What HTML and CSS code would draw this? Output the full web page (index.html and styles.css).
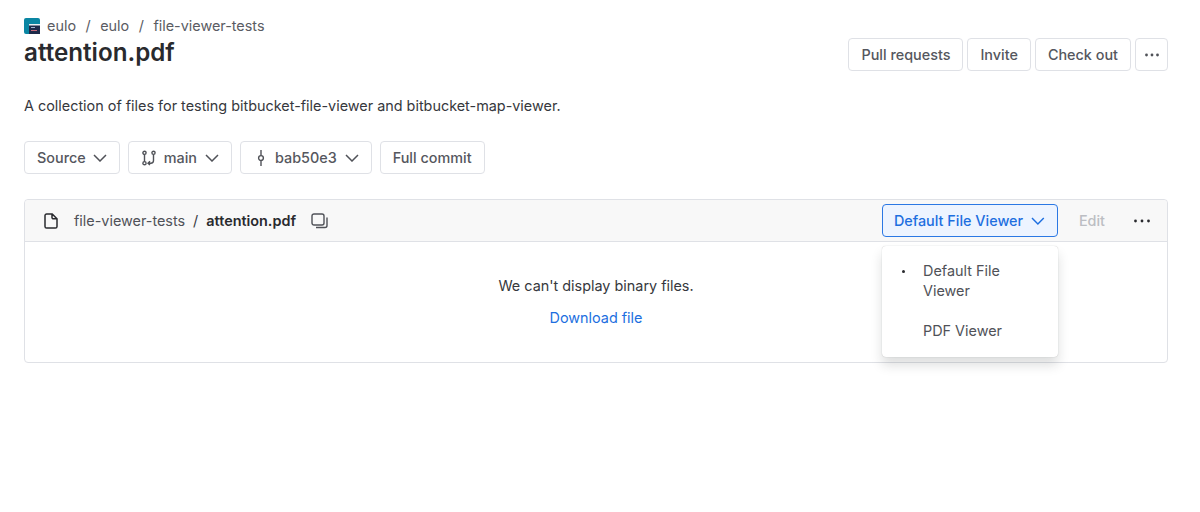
FILE: index.html
```html
<!DOCTYPE html>
<html lang="en">
<head>
<meta charset="utf-8">
<title>attention.pdf</title>
<link rel="stylesheet" href="styles.css">
</head>
<body>
<main class="page">
  <nav class="crumbs">
    <svg class="logo" width="16" height="16" viewBox="0 0 16 16"><rect width="16" height="16" rx="2" fill="#0a86a3"/><rect x="5" y="6" width="11" height="10" fill="#1d2a4a"/><rect x="5" y="6" width="11" height="1.5" fill="#e8eef2"/><rect x="7" y="9" width="4" height="1" fill="#9fb4d0"/><rect x="7" y="12" width="6" height="1" fill="#c56a7a"/></svg>
    <a class="crumb">eulo</a><span class="sep">/</span><a class="crumb">eulo</a><span class="sep">/</span><a class="crumb">file-viewer-tests</a>
  </nav>
  <header class="head">
    <h1 class="title">attention.pdf</h1>
    <div class="actions">
      <button class="btn">Pull requests</button>
      <button class="btn">Invite</button>
      <button class="btn">Check out</button>
      <button class="btn btn-more"><svg width="16" height="4" viewBox="0 0 16 4"><circle cx="2.5" cy="2" r="1.4"/><circle cx="8" cy="2" r="1.4"/><circle cx="13.5" cy="2" r="1.4"/></svg></button>
    </div>
  </header>
  <p class="desc">A collection of files for testing bitbucket-file-viewer and bitbucket-map-viewer.</p>
  <div class="refs">
    <button class="btn ref ref-source">Source<svg class="chev" width="14" height="8" viewBox="0 0 14 8"><path d="M1 1l6 6 6-6"/></svg></button>
    <button class="btn ref"><svg class="ico" width="14" height="16" viewBox="0 0 14 16"><circle cx="2.5" cy="2.8" r="1.6"/><circle cx="2.5" cy="13.2" r="1.6"/><circle cx="11.5" cy="2.8" r="1.6"/><path d="M2.5 4.4v7.2M11.5 4.4v6.100a2.700 2.700 0 0 1-2.700 2.700H6.500M8 11.300l-2 1.900 2 1.900"/></svg>main<svg class="chev" width="14" height="8" viewBox="0 0 14 8"><path d="M1 1l6 6 6-6"/></svg></button>
    <button class="btn ref"><svg class="ico commit" width="8" height="16" viewBox="0 0 8 16"><circle cx="4" cy="8" r="2.4"/><path d="M4 0v5.600M4 10.400V16"/></svg>bab50e3<svg class="chev" width="14" height="8" viewBox="0 0 14 8"><path d="M1 1l6 6 6-6"/></svg></button>
    <button class="btn ref">Full commit</button>
  </div>
  <section class="card">
    <div class="card-head">
      <svg class="ico file" width="14" height="16" viewBox="0 0 14 16"><path d="M2.6 1h5.6L13 5.8v7.6a1.6 1.6 0 0 1-1.6 1.6H2.6A1.6 1.6 0 0 1 1 13.400V2.600A1.600 1.600 0 0 1 2.600 1zM8 1v3.400A1.400 1.400 0 0 0 9.400 5.800H13"/></svg>
      <span class="path">file-viewer-tests</span><span class="path-sep">/</span><strong class="path-file">attention.pdf</strong>
      <svg class="ico copy" width="18" height="16" viewBox="0 0 18 16"><rect x="1" y="1" width="12" height="11" rx="2"/><path d="M16 4.500v8a2 2 0 0 1-2 2H5"/></svg>
      <div class="card-actions">
        <button class="viewer">Default File Viewer<svg class="chev" width="14" height="8" viewBox="0 0 14 8"><path d="M1 1l6 6 6-6"/></svg></button>
        <span class="edit">Edit</span>
        <svg class="dots" width="18" height="4" viewBox="0 0 18 4"><circle cx="2.500" cy="2" r="1.400"/><circle cx="9" cy="2" r="1.400"/><circle cx="15.500" cy="2" r="1.400"/></svg>
      </div>
      <ul class="menu">
        <li class="menu-item current">Default File Viewer</li>
        <li class="menu-item">PDF Viewer</li>
      </ul>
    </div>
    <div class="card-body">
      <p class="msg">We can't display binary files.</p>
      <a class="download">Download file</a>
    </div>
  </section>
</main>
</body>
</html>
```
FILE: styles.css
```css
* { box-sizing: border-box; }
html, body { margin: 0; background: #fff; }
body { font-family: Inter, "Liberation Sans", sans-serif; font-size: 14.4px; color: #36383d; height: 512px; overflow: hidden; }
.page { padding: 16px 32px 0 24px; }
.crumbs { display: flex; align-items: center; height: 20px; color: #5a5c63; line-height: 20px; }
.logo { margin-right: 7px; }
.sep { margin: 0 9.500px; }
.head { display: flex; justify-content: space-between; align-items: flex-start; height: 36px; }
.title { margin: 0; font-size: 24.200px; font-weight: 600; line-height: 34px; color: #292a2e; }
.actions { display: flex; gap: 4px; margin-top: 2px; }
.btn { height: 33px; padding: 0 12px; background: #fff; border: 1px solid #dfe1e6; border-radius: 4px; font: 500 14.4px Inter, "Liberation Sans", sans-serif; color: #55575e; display: inline-flex; align-items: center; }
.btn-more { width: 33px; padding: 0; justify-content: center; }
.btn-more svg { fill: #505258; }
.desc { margin: 24px 0 0; line-height: 20px; height: 20px; }
.refs { display: flex; gap: 8px; margin-top: 25px; }
.chev { fill: none; stroke: #505258; stroke-width: 1.500; margin-left: 8px; }
.ref-source .chev { margin-left: 7px; }
.ico { fill: none; stroke: #505258; stroke-width: 1.400; }
.ref .ico { margin: 0 8px 0 1px; }
.ref .commit { margin: 0 10px 0 4px; }
.card { position: relative; margin-top: 25px; height: 164px; border: 1px solid #dfe1e6; border-radius: 4px; }
.card-head { position: relative; display: flex; align-items: center; height: 42px; padding: 0 16px 0 19px; background: #f8f8f8; border-bottom: 1px solid #dfe1e6; border-radius: 4px 4px 0 0; }
.file { stroke: #292a2e; stroke-width: 1.500; margin-right: 16px; }
.path { color: #505258; }
.path-sep { margin: 0 8px; }
.path-file { font-weight: 600; color: #292a2e; }
.copy { margin-left: 15px; }
.card-actions { margin-left: auto; display: flex; align-items: center; }
.viewer { height: 33px; width: 176px; padding: 0 12px 0 11px; display: inline-flex; align-items: center; background: #edf4ff; border: 1px solid #2b78e4; border-radius: 4px; font: 500 14.4px Inter, "Liberation Sans", sans-serif; color: #1d6fe0; white-space: nowrap; }
.viewer .chev { stroke: #1d6fe0; }
.edit { margin-left: 21px; font-weight: 500; color: #bcbec3; }
.dots { margin-left: 28px; fill: #292a2e; }
.menu { position: absolute; z-index: 2; top: 46px; left: 857px; width: 176px; height: 111px; margin: 0; padding: 14.500px 0 0 41px; list-style: none; background: #fff; border-radius: 4px; box-shadow: 0 8px 12px rgba(30,31,33,.15), 0 0 1px rgba(30,31,33,.31); }
.menu-item { position: relative; line-height: 20px; color: #505258; width: 112px; }
.menu-item + .menu-item { margin-top: 20px; }
.current::before { content: ""; position: absolute; left: -21px; top: 9px; width: 3px; height: 3px; border-radius: 50%; background: #292a2e; }
.card-body { display: flex; flex-direction: column; align-items: center; padding-top: 34px; }
.msg { margin: 0; line-height: 20px; }
.download { margin-top: 12px; line-height: 20px; color: #1d6fe0; }
```
